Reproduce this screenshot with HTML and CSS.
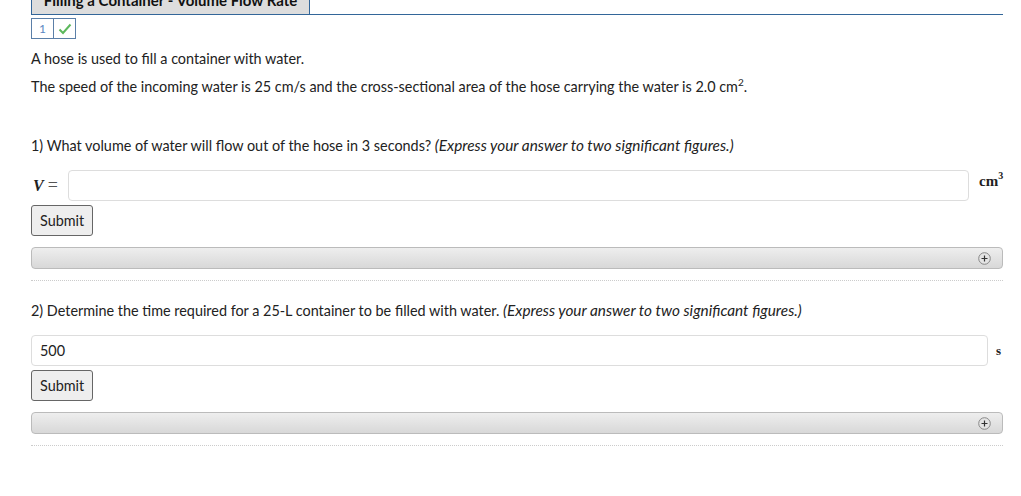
FILE: index.html
```html
<!DOCTYPE html>
<html>
<head>
<meta charset="utf-8">
<link rel="stylesheet" href="styles.css">
</head>
<body>
<div class="page">
  <div class="tabs">
    <div class="tab">Filling a Container - Volume Flow Rate</div>
  </div>
  <div class="pager">
    <span class="cell num">1</span>
    <span class="cell chk"><svg width="14" height="12" viewBox="0 0 14 12"><path d="M1.5 6.5 L5 10 L12.5 1.5" fill="none" stroke="#5cb85c" stroke-width="2"/></svg></span>
  </div>
  <p class="intro">A hose is used to fill a container with water.</p>
  <p class="intro">The speed of the incoming water is 25 cm/s and the cross-sectional area of the hose carrying the water is 2.0 cm<sup>2</sup>.</p>

  <div class="question q1">
    <p class="qtext">1) What volume of water will flow out of the hose in 3 seconds? <em>(Express your answer to two significant figures.)</em></p>
    <div class="answer">
      <span class="var"><i>V</i><span class="eq">=</span></span>
      <div class="input"></div>
      <span class="unit">cm<sup>3</sup></span>
    </div>
    <button class="submit">Submit</button>
    <div class="hint"><span class="plus"><svg width="13" height="13" viewBox="0 0 13 13"><circle cx="6.5" cy="6.5" r="5.8" fill="#e4e4e4" stroke="#888" stroke-width="1"/><path d="M3.5 6.5h6M6.5 3.5v6" stroke="#333" stroke-width="1.2"/></svg></span></div>
    <div class="sep"></div>
  </div>

  <div class="question q2">
    <p class="qtext">2) Determine the time required for a 25-L container to be filled with water. <em>(Express your answer to two significant figures.)</em></p>
    <div class="answer">
      <div class="input">500</div>
      <span class="unit unit-s">s</span>
    </div>
    <button class="submit">Submit</button>
    <div class="hint"><span class="plus"><svg width="13" height="13" viewBox="0 0 13 13"><circle cx="6.5" cy="6.5" r="5.8" fill="#e4e4e4" stroke="#888" stroke-width="1"/><path d="M3.5 6.5h6M6.5 3.5v6" stroke="#333" stroke-width="1.2"/></svg></span></div>
    <div class="sep"></div>
  </div>
</div>
</body>
</html>
```
FILE: styles.css
```css
html, body {
  margin: 0;
  padding: 0;
  background: #fff;
}
body {
  font-family: Lato, "Open Sans", sans-serif;
  font-size: 14.4px;
  color: #222;
}
em {
  font-size: 1.065em;
}
.page {
  margin-left: 31px;
  width: 972px;
  margin-top: -10px;
}
.tabs {
  border-bottom: 1px solid #336699;
  height: 24px;
  display: flex;
}
.tab {
  width: 279px;
  height: 24px;
  box-sizing: border-box;
  background: #dddddd;
  border: 1px solid #336699;
  border-bottom: none;
  font-weight: bold;
  font-size: 15px;
  text-align: center;
  line-height: 19px;
  color: #111;
  white-space: nowrap;
  overflow: hidden;
}
.pager {
  display: flex;
  margin-top: 3px;
}
.cell {
  width: 21px;
  height: 19px;
  border: 1px solid #5b7fa8;
  display: flex;
  align-items: center;
  justify-content: center;
}
.cell + .cell {
  border-left: none;
}
.num {
  color: #5b87c2;
  font-size: 12px;
}
.intro {
  margin: 0;
  line-height: 16px;
}
.pager + .intro {
  margin-top: 12px;
}
.intro + .intro {
  margin-top: 12px;
}
sup {
  font-size: 10px;
  line-height: 0;
  vertical-align: 6px;
}
.question .qtext {
  margin: 0;
  line-height: 16px;
}
.q1 .qtext {
  margin-top: 42px;
}
.q2 .qtext {
  margin-top: 21px;
}
.answer {
  display: flex;
  align-items: center;
  margin-top: 16px;
}
.var {
  font-family: "Liberation Serif", "DejaVu Serif", serif;
  font-size: 16px;
  font-weight: bold;
  width: 37px;
  color: #222;
  display: flex;
  align-items: center;
  padding-left: 2px;
  box-sizing: border-box;
}
.eq {
  font-weight: normal;
  font-size: 18px;
  color: #555;
  margin-left: 4px;
}
.input {
  flex: 1;
  height: 31px;
  box-sizing: border-box;
  border: 1px solid #dddddd;
  border-radius: 4px;
  padding: 0 8px;
  line-height: 29px;
  font-size: 14.4px;
  color: #222;
}
.unit {
  font-family: "Liberation Serif", "DejaVu Serif", serif;
  font-size: 15px;
  font-weight: bold;
  color: #222;
  width: 34px;
  padding-left: 10px;
  box-sizing: border-box;
  align-self: flex-start;
  margin-top: 3px;
}
.unit sup {
  font-size: 10px;
  vertical-align: 7px;
}
.unit-s {
  width: 15px;
  padding-left: 8px;
  align-self: center;
  font-size: 13px;
  margin-top: 0;
}
.submit {
  display: block;
  margin-top: 4px;
  height: 31px;
  padding: 0 8px;
  font-family: inherit;
  font-size: 14.4px;
  color: #222;
  background: #eeeeee;
  border: 1px solid #666;
  border-radius: 3px;
}
.hint {
  margin-top: 11px;
  height: 22px;
  box-sizing: border-box;
  border: 1px solid #bbbbbb;
  border-radius: 4px;
  background: linear-gradient(#eeeeee, #d8d8d8);
  display: flex;
  justify-content: flex-end;
  align-items: center;
  padding-right: 11px;
}
.plus svg {
  display: block;
}
.sep {
  margin-top: 11px;
  border-top: 1px dotted #cccccc;
}
```
